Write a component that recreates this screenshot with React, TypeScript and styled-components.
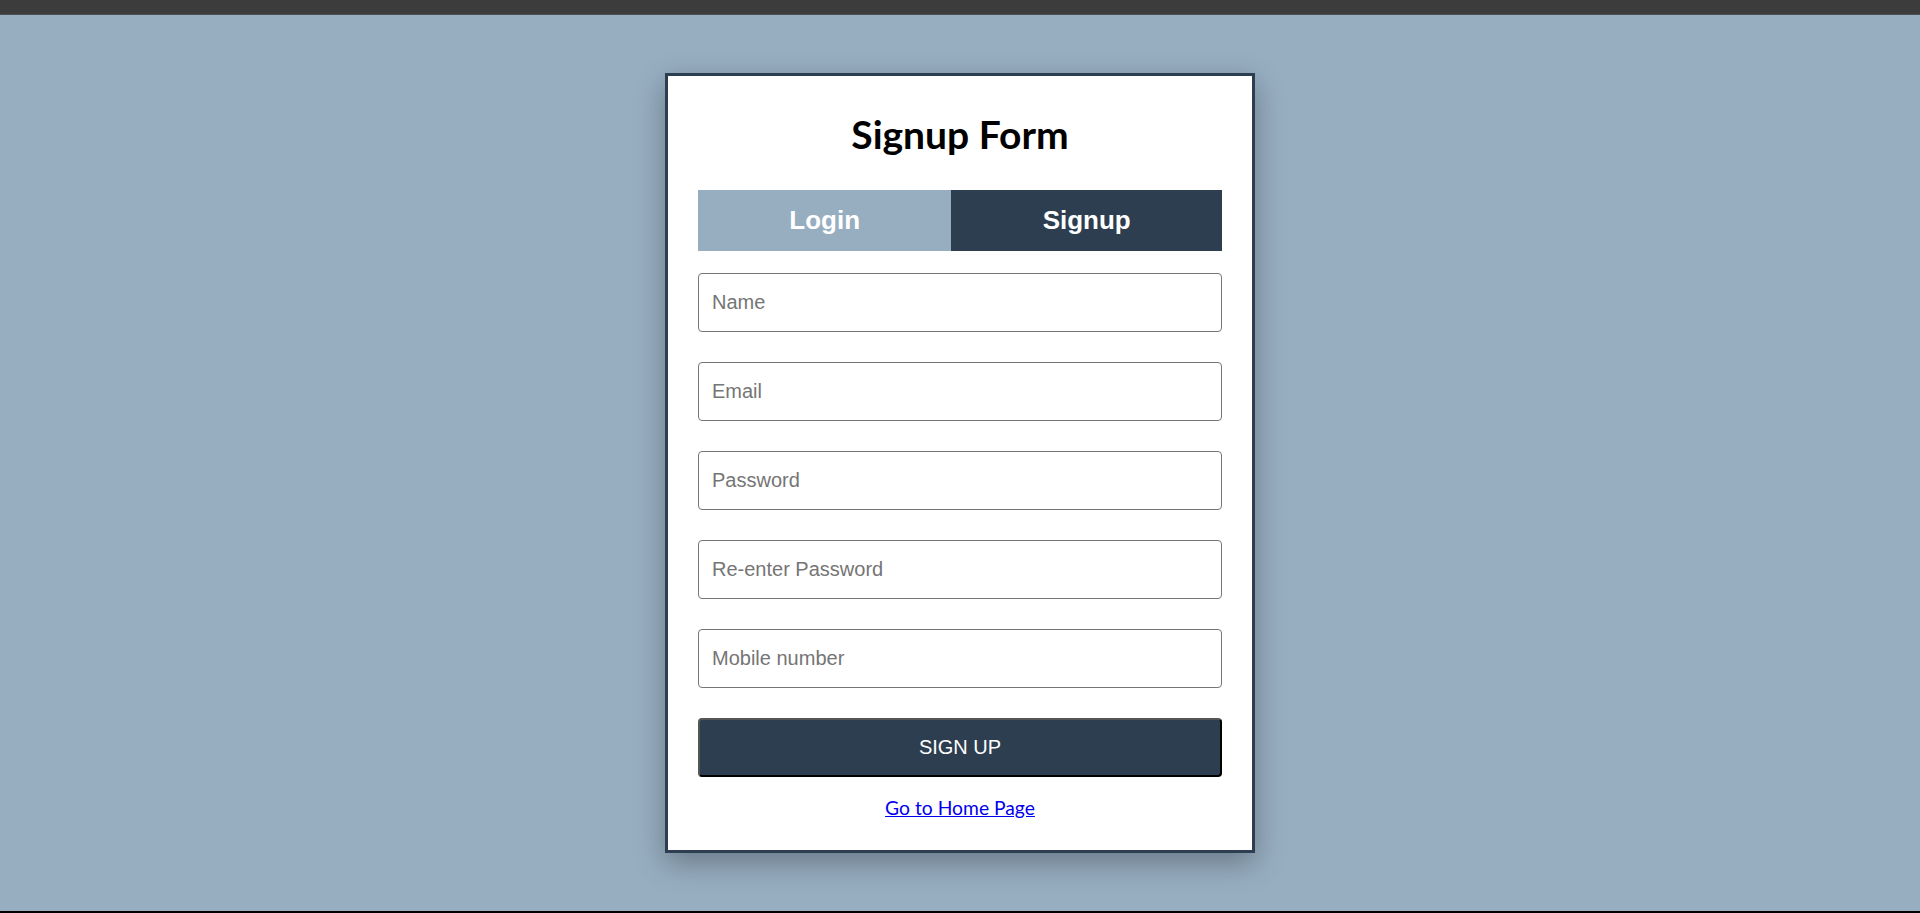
import React from "react";
import styled, { createGlobalStyle } from "styled-components";

const GlobalStyle = createGlobalStyle`
  html, body {
    margin: 0;
    padding: 0;
  }
  body {
    font-family: "Liberation Sans", Arial, sans-serif;
    background: #97aec1;
  }
  * { box-sizing: border-box; }
`;

const Page = styled.div`
  display: flex;
  flex-direction: column;
  height: 913px;
  background: #97aec1;
`;

const TopBar = styled.div`
  height: 15px;
  flex: none;
  background: #3c3c3c;
  border-bottom: 1px solid #4f5052;
`;

const BottomLine = styled.div`
  height: 2px;
  flex: none;
  background: #000;
`;

const Main = styled.main`
  flex: 1;
  display: flex;
  align-items: center;
  justify-content: center;
`;

const Card = styled.div`
  width: 590px;
  height: 780px;
  background: #fff;
  border: 3px solid #2c3e50;
  box-shadow: 0 10px 28px rgba(0, 0, 0, 0.3);
  padding: 30px;
  display: flex;
  flex-direction: column;
`;

const Title = styled.h1`
  margin: 5px 0 32px;
  font-family: Lato, "Open Sans", sans-serif;
  font-weight: 700;
  font-size: 39px;
  line-height: 47px;
  text-align: center;
  color: #000;
`;

const Tabs = styled.div`
  display: flex;
  height: 61px;
`;

const Tab = styled.button<{ $active?: boolean }>`
  flex: 1 1 auto;
  border: none;
  margin: 0;
  padding: 0 10px;
  font-family: "Liberation Sans", Arial, sans-serif;
  font-weight: 700;
  font-size: 26px;
  color: #fff;
  cursor: pointer;
  background: ${(p) => (p.$active ? "#2c3e50" : "#97aec1")};
`;

const Form = styled.form`
  display: flex;
  flex-direction: column;
  gap: 30px;
  margin-top: 22px;
`;

const Input = styled.input`
  height: 59px;
  width: 100%;
  border: 1px solid #767676;
  border-radius: 4px;
  padding: 0 13px;
  font-family: "Liberation Sans", Arial, sans-serif;
  font-size: 20px;
  color: #000;
  background: #fff;
  outline: none;
  &::placeholder {
    color: #757575;
  }
`;

const SubmitButton = styled.button`
  height: 59px;
  width: 100%;
  background: #2c3e50;
  color: #fff;
  font-family: "Liberation Sans", Arial, sans-serif;
  font-size: 20px;
  border-width: 2px;
  border-style: solid;
  border-color: #555 #000 #000 #555;
  border-radius: 4px;
  cursor: pointer;
`;

const LinkRow = styled.div`
  margin-top: 19px;
  text-align: center;
  font-family: Lato, "Open Sans", sans-serif;
  font-size: 19.3px;
  line-height: 23px;
`;

const HomeLink = styled.a`
  color: #0000ee;
  text-decoration: underline;
`;

export default function App() {
  return (
    <>
      <GlobalStyle />
      <Page>
        <TopBar />
        <Main>
          <Card>
            <Title>Signup Form</Title>
            <Tabs>
              <Tab type="button">Login</Tab>
              <Tab type="button" $active>
                Signup
              </Tab>
            </Tabs>
            <Form onSubmit={(e) => e.preventDefault()}>
              <Input type="text" placeholder="Name" />
              <Input type="email" placeholder="Email" />
              <Input type="password" placeholder="Password" />
              <Input type="password" placeholder="Re-enter Password" />
              <Input type="text" placeholder="Mobile number" />
              <SubmitButton type="submit">SIGN UP</SubmitButton>
            </Form>
            <LinkRow>
              <HomeLink href="#">Go to Home Page</HomeLink>
            </LinkRow>
          </Card>
        </Main>
        <BottomLine />
      </Page>
    </>
  );
}
